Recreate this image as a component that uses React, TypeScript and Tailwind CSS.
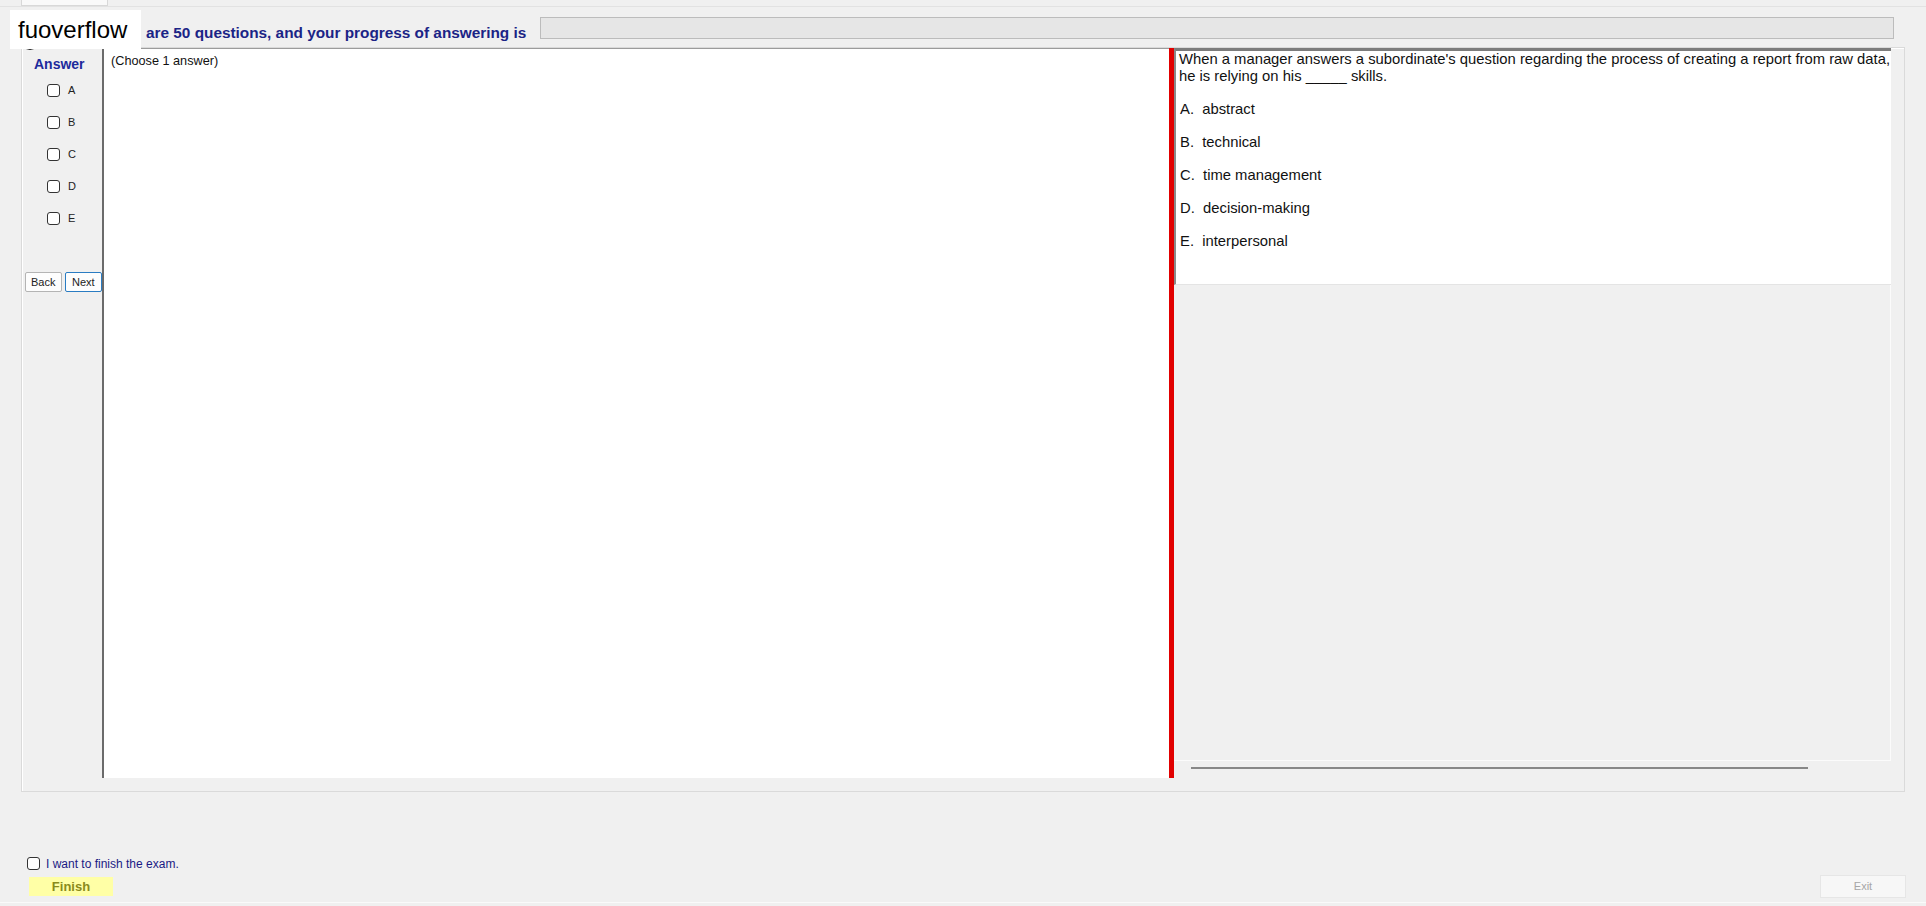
import React from 'react';

const options = [
    { key: 'A', text: 'abstract' },
    { key: 'B', text: 'technical' },
    { key: 'C', text: 'time management' },
    { key: 'D', text: 'decision-making' },
    { key: 'E', text: 'interpersonal' },
];

const Box = () => (
    <span className="block w-[13px] h-[13px] rounded-[3px] border border-[#333] bg-white" />
);

const App = () => {
    return (
        <div className="relative w-[1926px] h-[906px] overflow-hidden bg-[#f0f0f0] font-['Liberation_Sans',Arial,sans-serif] text-black flex flex-col">
            {/* tab strip */}
            <div className="h-[7px] border-b border-[#e2e2e2] flex">
                <div className="ml-[21px] w-[87px] h-[6px] bg-[#f9f9f9] border-x border-b border-[#d8d8d8]" />
            </div>

            {/* header */}
            <div className="relative h-[40px] flex items-start">
                <span className="absolute left-[20px] top-[23px] w-[20px] h-[20px] rounded-full bg-[#1e1e1e]" />
                <p className="ml-[146px] mt-[17px] text-[15.35px] leading-[18px] font-bold text-[#1b2486] whitespace-nowrap">
                    are 50 questions, and your progress of answering is
                </p>
                <div className="ml-[14px] mt-[10px] flex-1 mr-[32px] h-[22px] bg-[#e6e6e6] border border-[#bcbcbc]" />
                <div className="absolute left-[10px] top-[3px] w-[131px] h-[39px] bg-white flex items-center pl-[8px]">
                    <span className="text-[24px] leading-[28px]">fuoverflow</span>
                </div>
            </div>

            {/* main group */}
            <div className="ml-[21px] w-[1884px] h-[745px] border border-[#dadada] shadow-[inset_1px_1px_0_#ffffff]">
                <div className="flex h-[730px]">
                    {/* answer column */}
                    <div className="w-[80px] flex flex-col pt-[8px] border-l border-white">
                        <p className="pl-[11px] text-[14px] leading-[16px] font-bold text-[#1d2a9c]">Answer</p>
                        <div className="mt-[12px] flex flex-col gap-[19px] pl-[24px]">
                            {options.map((o) => (
                                <label key={o.key} className="flex items-center h-[13px]">
                                    <Box />
                                    <span className="ml-[8px] text-[11px] leading-[13px] text-[#222]">{o.key}</span>
                                </label>
                            ))}
                        </div>
                        <div className="mt-[47px] flex gap-[3px] pl-[2px]">
                            <button className="w-[37px] h-[20px] bg-[#fdfdfd] border border-[#b4b4b4] rounded-[2px] text-[11px] leading-[18px] text-[#222]">
                                Back
                            </button>
                            <button className="w-[38px] h-[20px] bg-[#fdfdfd] border border-[#2a7cc2] rounded-[2px] text-[11px] leading-[18px] text-[#222]">
                                Next
                            </button>
                        </div>
                    </div>

                    {/* explanation panel */}
                    <div className="w-[1067px] bg-white border-l-2 border-l-[#6b6b6b] border-t border-t-[#9c9c9c] pl-[7px] pt-[5px]">
                        <p className="text-[12.7px] leading-[15px] text-[#111]">(Choose 1 answer)</p>
                    </div>

                    {/* splitter */}
                    <div className="w-[5px] bg-[#e10000]" />

                    {/* question panel */}
                    <div className="w-[717px] flex flex-col">
                        <div className="h-[237px] bg-white border-t-[3px] border-t-[#7c7c7c] border-l-2 border-l-[#8a8a8a] border-b border-b-[#e4e4e4] pl-[3px]">
                            <p className="text-[14.8px] leading-[17px] text-[#111] whitespace-nowrap">
                                When a manager answers a subordinate's question regarding the process of creating a report from raw data,
                                <br />
                                he is relying on his _____ skills.
                            </p>
                            <div className="flex flex-col gap-[16px] mt-[16px] pl-[1px]">
                                {options.map((o) => (
                                    <p key={o.key} className="text-[14.8px] leading-[17px] text-[#111]">
                                        {o.key}.&nbsp;&nbsp;{o.text}
                                    </p>
                                ))}
                            </div>
                        </div>
                        <div className="h-[476px] border-r border-b border-[#fbfbfb]" />
                        <div className="flex-1 pt-[6px] pl-[17px]">
                            <div className="w-[617px] h-[2px] bg-[#888888]" />
                        </div>
                    </div>
                </div>
            </div>

            {/* finish controls */}
            <div className="flex-1 flex flex-col">
                <label className="mt-[65px] ml-[27px] flex items-center h-[13px]">
                    <Box />
                    <span className="ml-[6px] text-[12px] leading-[14px] text-[#1a1a84]">I want to finish the exam.</span>
                </label>
                <div className="mt-[5px] flex items-center justify-between h-[23px]">
                    <button className="ml-[29px] w-[84px] h-[19px] bg-[#ffffa6] text-[13px] leading-[19px] font-bold text-[#8a8a1c]">
                        Finish
                    </button>
                    <button className="mr-[20px] w-[86px] h-[23px] bg-[#f7f7f7] border border-[#e6e6e6] text-[11px] leading-[21px] text-[#a6a6a6]">
                        Exit
                    </button>
                </div>
                <div className="mt-auto h-[4px] border-t border-[#fafafa]" />
            </div>
        </div>
    );
};

export default App;
